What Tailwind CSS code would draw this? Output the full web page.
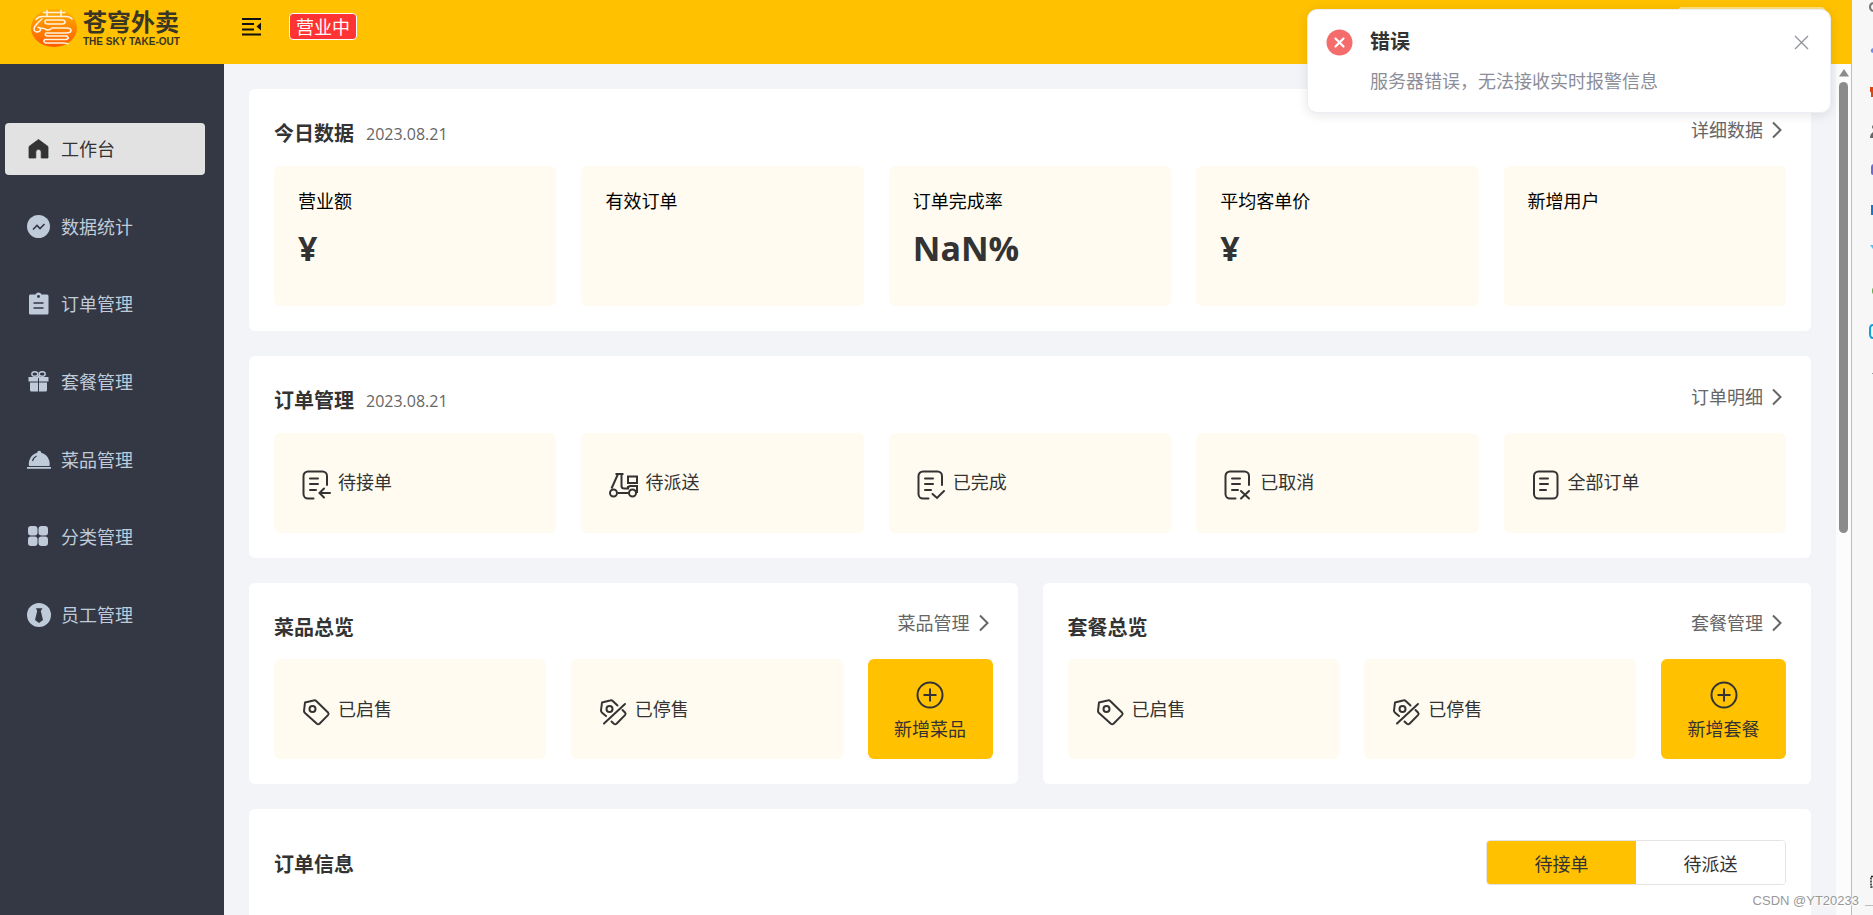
<!DOCTYPE html>
<html lang="zh-CN">
<head>
<meta charset="utf-8">
<title>苍穹外卖</title>
<script src="https://cdn.jsdelivr.net/npm/@tailwindcss/browser@4"></script>
</head>
<body class="flex h-screen overflow-hidden bg-[#f7f7f7] font-['Open_Sans','Noto_Sans_CJK_SC',sans-serif] text-lg font-normal text-[#333]">

<svg class="hidden" aria-hidden="true">
  <symbol id="doc" viewBox="0 0 35 35" fill="none" stroke="#333" stroke-width="2" stroke-linecap="round"><path d="M11 13.500h8M11 19h8M11 25h6"/></symbol>
  <symbol id="sheet" viewBox="0 0 35 35" fill="none" stroke="#333" stroke-width="2" stroke-linecap="round"><path d="M28 20V11a4.500 4.500 0 0 0-4.500-4.500H9A4.500 4.500 0 0 0 4.500 11v18A4.500 4.500 0 0 0 9 33.500h5.500"/></symbol>
  <symbol id="chev" viewBox="0 0 12 18" fill="none" stroke="#666" stroke-width="2"><path d="M2 1.500 9.500 9 2 16.500"/></symbol>
  <symbol id="tag" viewBox="0 0 35 35" fill="none" stroke="#333" stroke-width="2" stroke-linejoin="round"><path d="M5 19 6 10.500 14.500 8.500a3 3 0 0 1 3 .8L29 20.500q1.200 1.300 0 2.600L20.500 31.700q-1.300 1.100-2.600 0L6 21Q5 20 5 19z"/><circle cx="13.500" cy="17" r="3"/></symbol>
  <symbol id="tagoff" viewBox="0 0 35 35" fill="none" stroke="#333" stroke-width="2" stroke-linejoin="round" stroke-linecap="round"><path d="M10 24 5.800 20.500Q5 19.500 5 18.500L6 10.500 14 8.500a3 3 0 0 1 3 .8L21.500 13.500M26.500 18 29 20.500q1.200 1.300 0 2.600L20.500 31.700q-1.300 1.100-2.600 0L15.500 29.500M29 12 8 31.500"/><circle cx="13.500" cy="17" r="3"/></symbol>
  <symbol id="plus" viewBox="0 0 30 30" fill="none" stroke="#333" stroke-width="2"><circle cx="15" cy="15" r="12.500"/><path d="M15 8.500v13M8.500 15h13"/></symbol>
</svg>

<div class="flex min-w-0 flex-1 flex-col">
  <header class="flex h-16 shrink-0 items-start bg-[#ffc100]">
    <div class="flex w-56 items-start pt-2 pl-[30px]">
      <svg class="mt-px h-[39px] w-[48px]" viewBox="0 0 48 39" fill="none" aria-hidden="true">
        <defs><linearGradient id="lg" x1="0" y1="0" x2="0" y2="1"><stop offset="0" stop-color="#ffb000"/><stop offset=".45" stop-color="#ff8a00"/><stop offset="1" stop-color="#ff5a00"/></linearGradient></defs>
        <ellipse cx="24" cy="19" rx="23" ry="19" fill="url(#lg)"/>
        <g stroke="#fff3e0" stroke-width="1.600" stroke-linecap="round" stroke-linejoin="round">
          <path d="M13.500 3.500H35M17 1.500v5.500M31 1.500v5.500M6 10.500Q8 7.500 12 7.500H36Q40 7.500 42 10"/>
          <path d="M16 11H32q3 0 3 2t-3 2H18q-3 0-3-2t1-2"/>
          <path d="M12 10Q7 14 4.500 18q-1.500 4 2 5 4 0 4-3-.5-2-2.500-1.500M10 19q4 0 6 1.500 3 1.500 6-1.500h14q5 0 5 2.500t-5 2.500H16q-2 2 1 3h20"/>
          <path d="M37 27.500q3 2-1 3H15q-3 2 1 3.500h17q5 0 5 1"/>
        </g>
      </svg>
      <div class="flex flex-col gap-[2px] pt-[2px] pl-[5px] text-[#3a3626]">
        <span class="text-2xl leading-6 font-bold">苍穹外卖</span>
        <span class="font-['Liberation_Sans',sans-serif] text-[10px] leading-3 font-bold">THE SKY TAKE-OUT</span>
      </div>
    </div>
    <button type="button" aria-label="收起菜单" class="mt-4 ml-[17px] h-[21px] w-[21px]">
      <svg viewBox="0 0 21 21" class="size-full" fill="none" stroke="#111" stroke-width="2"><path d="M1 3h19M1 8h12M1 13.500h12M1 18.500h19"/><path d="M20 6.500v8L15.500 10.500z" fill="#111" stroke="none"/></svg>
    </button>
    <span class="mt-[13px] ml-[27px] flex h-[27px] items-center rounded border border-white bg-[#ff3333] px-[6px] text-white">营业中</span>
    <button type="button" aria-label="账户" class="mt-[7px] mr-[26px] ml-auto h-10 w-[147px] rounded bg-white/50"></button>
  </header>

  <div class="flex min-h-0 flex-1">
    <aside class="w-56 shrink-0 bg-[#343744] pt-[59px] pr-[19px] pl-[5px]">
      <nav class="flex h-[518px] flex-col justify-between text-[#bfcbd9]">
        <a href="#" class="flex h-[52px] items-center gap-[10px] rounded bg-[#e2e2e2] pl-[22px] text-[#333]">
          <svg class="size-6" viewBox="0 0 24 24" fill="currentColor"><path d="M11.500 2.500 2 9.500v11.500h6.800v-6a2.700 2.700 0 0 1 5.400 0v6H21V9.500z" stroke="currentColor" stroke-linejoin="round" stroke-width=".8"/></svg>工作台</a>
        <a href="#" class="flex h-[52px] items-center gap-[10px] rounded pl-[22px]">
          <svg class="size-6" viewBox="0 0 24 24" fill="currentColor"><circle cx="11.500" cy="11.500" r="11.500"/><path d="m6 14.500 4-4 3 3 4.500-4.500" fill="none" stroke="#343744" stroke-width="1.600"/></svg>数据统计</a>
        <a href="#" class="flex h-[52px] items-center gap-[10px] rounded pl-[22px]">
          <svg class="size-6" viewBox="0 0 24 24"><path fill="currentColor" d="M3 2.500h5.500a3.200 3.200 0 0 1 6 0H20q1.500 0 1.500 1.500v17q0 1.500-1.500 1.500H3.500Q2 22.500 2 21V4q0-1.500 1-1.500z"/><path d="M6.500 11h10M6.500 16h10" stroke="#343744" stroke-width="1.600"/><circle cx="11.500" cy="4.500" r="1.400" fill="#343744"/></svg>订单管理</a>
        <a href="#" class="flex h-[52px] items-center gap-[10px] rounded pl-[22px]">
          <svg class="size-6" viewBox="0 0 24 24" fill="currentColor"><path d="M1.500 7H11v4.500H1.500zM12 7h9.500v4.500H12zM3 12.500h8v9H4.500Q3 21.500 3 20zM12 12.500h8V20q0 1.500-1.500 1.500H12z"/><g fill="none" stroke="currentColor" stroke-width="1.400"><ellipse cx="7.800" cy="4" rx="3" ry="2.200"/><ellipse cx="15.200" cy="4" rx="3" ry="2.200"/><path d="m10 5 1.500 2L13 5"/></g></svg>套餐管理</a>
        <a href="#" class="flex h-[52px] items-center gap-[10px] rounded pl-[22px]">
          <svg class="size-6" viewBox="0 0 24 24" fill="currentColor"><path d="M2 18a10.500 11.500 0 0 1 8.200-13.300 2 2 0 1 1 4 0A10.500 11.500 0 0 1 22.500 18zM0 19h24v1.700H0z"/><path d="M5.500 13Q6.500 9.500 9.500 8" fill="none" stroke="#343744" stroke-width="1.200"/></svg>菜品管理</a>
        <a href="#" class="flex h-[52px] items-center gap-[10px] rounded pl-[22px]">
          <svg class="size-6" viewBox="0 0 24 24" fill="currentColor"><rect x="1" y="1" width="9.500" height="9.500" rx="3"/><rect x="11.500" y="1" width="9.500" height="9.500" rx="3"/><rect x="1" y="11.500" width="9.500" height="9.500" rx="3"/><rect x="11.500" y="11.500" width="9.500" height="9.500" rx="3"/></svg>分类管理</a>
        <a href="#" class="flex h-[52px] items-center gap-[10px] rounded pl-[22px]">
          <svg class="size-6" viewBox="0 0 24 24" fill="currentColor"><circle cx="12" cy="12" r="12"/><path fill="#343744" d="M9 5.200h6.500L13.800 8l2.200 9-4 3-4-3 2.200-9z"/></svg>员工管理</a>
      </nav>
    </aside>

    <main class="flex min-w-0 flex-1 flex-col gap-[25px] overflow-hidden bg-[#f3f4f7] p-[25px]">
      <section class="shrink-0 rounded-md bg-white px-[25px] pb-[25px]">
        <div class="flex h-[77px] items-center justify-between pt-1">
          <h2 class="flex items-center gap-3 pt-2 text-xl font-bold">今日数据<span class="text-base font-normal text-[#666]">2023.08.21</span></h2>
          <a href="#" class="flex items-center gap-2 text-[#666]">详细数据<svg class="mr-[3px] h-[18px] w-3"><use href="#chev"/></svg></a>
        </div>
        <div class="grid grid-cols-5 gap-[25px] text-black">
          <div class="h-[140px] rounded-md bg-[#fffbf0] px-6 pt-[21px]"><p class="leading-7">营业额</p><p class="pt-2 text-[34px] leading-[50px] font-bold text-[#333]">¥</p></div>
          <div class="h-[140px] rounded-md bg-[#fffbf0] px-6 pt-[21px]"><p class="leading-7">有效订单</p></div>
          <div class="h-[140px] rounded-md bg-[#fffbf0] px-6 pt-[21px]"><p class="leading-7">订单完成率</p><p class="pt-2 text-[34px] leading-[50px] font-bold text-[#333]">NaN%</p></div>
          <div class="h-[140px] rounded-md bg-[#fffbf0] px-6 pt-[21px]"><p class="leading-7">平均客单价</p><p class="pt-2 text-[34px] leading-[50px] font-bold text-[#333]">¥</p></div>
          <div class="h-[140px] rounded-md bg-[#fffbf0] px-6 pt-[21px]"><p class="leading-7">新增用户</p></div>
        </div>
      </section>

      <section class="shrink-0 rounded-md bg-white px-[25px] pb-[25px]">
        <div class="flex h-[77px] items-center justify-between pt-1">
          <h2 class="flex items-center gap-3 pt-2 text-xl font-bold">订单管理<span class="text-base font-normal text-[#666]">2023.08.21</span></h2>
          <a href="#" class="flex items-center gap-2 text-[#666]">订单明细<svg class="mr-[3px] h-[18px] w-3"><use href="#chev"/></svg></a>
        </div>
        <div class="grid grid-cols-5 gap-[25px]">
          <a href="#" class="flex h-[100px] items-center gap-1 rounded-md bg-[#fffbf0] px-[25px] pb-0.5">
            <svg class="size-[35px]" viewBox="0 0 35 35" fill="none" stroke="#333" stroke-width="2" stroke-linecap="round"><use href="#doc"/><use href="#sheet"/><path d="M31 28H20.500M25 23.500 20.500 28 25 32.500"/></svg>待接单</a>
          <a href="#" class="flex h-[100px] items-center gap-1 rounded-md bg-[#fffbf0] px-[25px] pb-0.5">
            <svg class="size-[35px]" viewBox="0 0 35 35" fill="none" stroke="#333" stroke-width="2"><path d="M9.500 9h8M12 9 5.500 23.500M15.500 9v12q0 2.500 3 2.500h3.500V21M12 28h10.500M22 11.500h9v6.500h-9zM22 23.500Q22 21 24.500 21H31V28"/><circle cx="7.500" cy="28" r="3.500"/><circle cx="26.500" cy="28" r="3.500"/></svg>待派送</a>
          <a href="#" class="flex h-[100px] items-center gap-1 rounded-md bg-[#fffbf0] px-[25px] pb-0.5">
            <svg class="size-[35px]" viewBox="0 0 35 35" fill="none" stroke="#333" stroke-width="2" stroke-linecap="round"><use href="#doc"/><use href="#sheet"/><path d="m18.500 29 4.500 4L30 26"/></svg>已完成</a>
          <a href="#" class="flex h-[100px] items-center gap-1 rounded-md bg-[#fffbf0] px-[25px] pb-0.5">
            <svg class="size-[35px]" viewBox="0 0 35 35" fill="none" stroke="#333" stroke-width="2" stroke-linecap="round"><use href="#doc"/><use href="#sheet"/><path d="m20 26 8 7.500M28 26l-8 7.500"/></svg>已取消</a>
          <a href="#" class="flex h-[100px] items-center gap-1 rounded-md bg-[#fffbf0] px-[25px] pb-0.5">
            <svg class="size-[35px]" viewBox="0 0 35 35" fill="none" stroke="#333" stroke-width="2"><use href="#doc"/><rect x="5" y="6.500" width="23.500" height="27" rx="4.500"/></svg>全部订单</a>
        </div>
      </section>

      <div class="grid shrink-0 grid-cols-2 gap-[25px]">
        <section class="rounded-md bg-white px-[25px] pb-[25px]">
          <div class="flex h-[76px] items-center justify-between pt-1">
            <h2 class="pt-[10px] text-xl font-bold">菜品总览</h2>
            <a href="#" class="flex items-center gap-2 text-[#666]">菜品管理<svg class="mr-[3px] h-[18px] w-3"><use href="#chev"/></svg></a>
          </div>
          <div class="flex gap-[25px]">
            <div class="flex h-[100px] flex-1 items-center gap-1 rounded-md bg-[#fffbf0] px-[25px]"><svg class="size-[35px]"><use href="#tag"/></svg>已启售</div>
            <div class="flex h-[100px] flex-1 items-center gap-1 rounded-md bg-[#fffbf0] px-[25px]"><svg class="size-[35px]"><use href="#tagoff"/></svg>已停售</div>
            <button type="button" class="flex h-[100px] w-[125px] flex-col items-center justify-center gap-[5px] rounded-md bg-[#ffc100] pt-[5px]"><svg class="size-[30px]"><use href="#plus"/></svg>新增菜品</button>
          </div>
        </section>
        <section class="rounded-md bg-white px-[25px] pb-[25px]">
          <div class="flex h-[76px] items-center justify-between pt-1">
            <h2 class="pt-[10px] text-xl font-bold">套餐总览</h2>
            <a href="#" class="flex items-center gap-2 text-[#666]">套餐管理<svg class="mr-[3px] h-[18px] w-3"><use href="#chev"/></svg></a>
          </div>
          <div class="flex gap-[25px]">
            <div class="flex h-[100px] flex-1 items-center gap-1 rounded-md bg-[#fffbf0] px-[25px]"><svg class="size-[35px]"><use href="#tag"/></svg>已启售</div>
            <div class="flex h-[100px] flex-1 items-center gap-1 rounded-md bg-[#fffbf0] px-[25px]"><svg class="size-[35px]"><use href="#tagoff"/></svg>已停售</div>
            <button type="button" class="flex h-[100px] w-[125px] flex-col items-center justify-center gap-[5px] rounded-md bg-[#ffc100] pt-[5px]"><svg class="size-[30px]"><use href="#plus"/></svg>新增套餐</button>
          </div>
        </section>
      </div>

      <section class="h-[300px] shrink-0 rounded-md bg-white px-[25px] pt-[31px]">
        <div class="flex items-center justify-between">
          <h2 class="pt-1 text-xl font-bold">订单信息</h2>
          <div class="flex h-[45px] w-[300px] overflow-hidden rounded border border-[#e5e4e4]">
            <button type="button" class="flex-1 bg-[#ffc100] pt-0.5">待接单</button>
            <button type="button" class="flex-1 bg-white pt-0.5">待派送</button>
          </div>
        </div>
      </section>
    </main>

    <div class="flex w-[15px] shrink-0 flex-col items-center bg-[#fcfcfc] pt-[5px]" aria-hidden="true">
      <svg class="h-[8px] w-[10px]" viewBox="0 0 10 8"><path d="M5 0 10 7.500H0z" fill="#8b8b8b"/></svg>
      <div class="mt-[5px] h-[451px] w-[9px] rounded-full bg-[#8b8b8b]"></div>
    </div>
  </div>
</div>

<div class="flex w-[22px] shrink-0 justify-end border-l border-[#bdbdbd] bg-[#f7f7f7]" aria-hidden="true">
  <svg class="h-[915px] w-[10px]" viewBox="0 0 10 915" fill="none">
    <path d="M10 3q-3 1-3 4t3 4" stroke="#777" stroke-width="2"/>
    <path d="M10 48q-3 1-2 4l2 1z" fill="#6d8ff5"/>
    <path d="M7 87h3v10H8v-5H7z" fill="#d9480f"/>
    <path d="M10 125q-2 2 0 4v9H7q0-4 3-6z" fill="#666"/>
    <path d="M10 164q-2 1-2 3v6q0 2 2 2z" fill="#6b6bd6"/>
    <path d="M8 205h2v10H8z" fill="#0f78d4"/>
    <path d="M7 245h3v4z" fill="#4fc3f7"/>
    <path d="M10 288q-1 0-1 3t1 3z" fill="#5fa84a"/>
    <path d="M10 325q-3 0-3 4v5q0 4 3 4" stroke="#12a0d7" stroke-width="2"/>
    <path d="M9 373.500h1" stroke="#999"/>
    <path d="M10 876.500H8V887h2" stroke="#222" stroke-width="1.500" stroke-dasharray="2 1"/>
    <path d="M2 905.500h8" stroke="#bbb"/>
  </svg>
</div>

<div role="alert" class="absolute top-[9px] right-[42px] flex w-[524px] rounded-[10px] border border-[#ebeef5] bg-white pt-4 pb-4 pl-[18px] shadow-[0_2px_12px_rgba(0,0,0,0.1)]">
  <svg class="mt-[3px] size-[27px]" viewBox="0 0 27 27"><circle cx="13.500" cy="13.500" r="13" fill="#f56c6c"/><path d="m9.500 9.500 8 8M17.500 9.500l-8 8" stroke="#fff" stroke-width="2.200" stroke-linecap="round"/></svg>
  <div class="pl-[17px]">
    <h2 class="text-xl leading-8 font-bold">错误</h2>
    <p class="pt-2 leading-[30px] text-[#8b8e99]">服务器错误，无法接收实时报警信息</p>
  </div>
  <button type="button" aria-label="关闭" class="absolute top-[25px] right-[21px] size-[15px]"><svg viewBox="0 0 15 15" class="size-full" stroke="#909399" stroke-width="1.300"><path d="m1 1 13 13M14 1 1 14"/></svg></button>
</div>

<div class="absolute right-[14px] bottom-[4px] font-['Liberation_Sans',sans-serif] text-[13px] leading-5 font-normal text-[#999] [text-shadow:1px_1px_0_#fff]">CSDN @YT20233</div>
</body>
</html>
